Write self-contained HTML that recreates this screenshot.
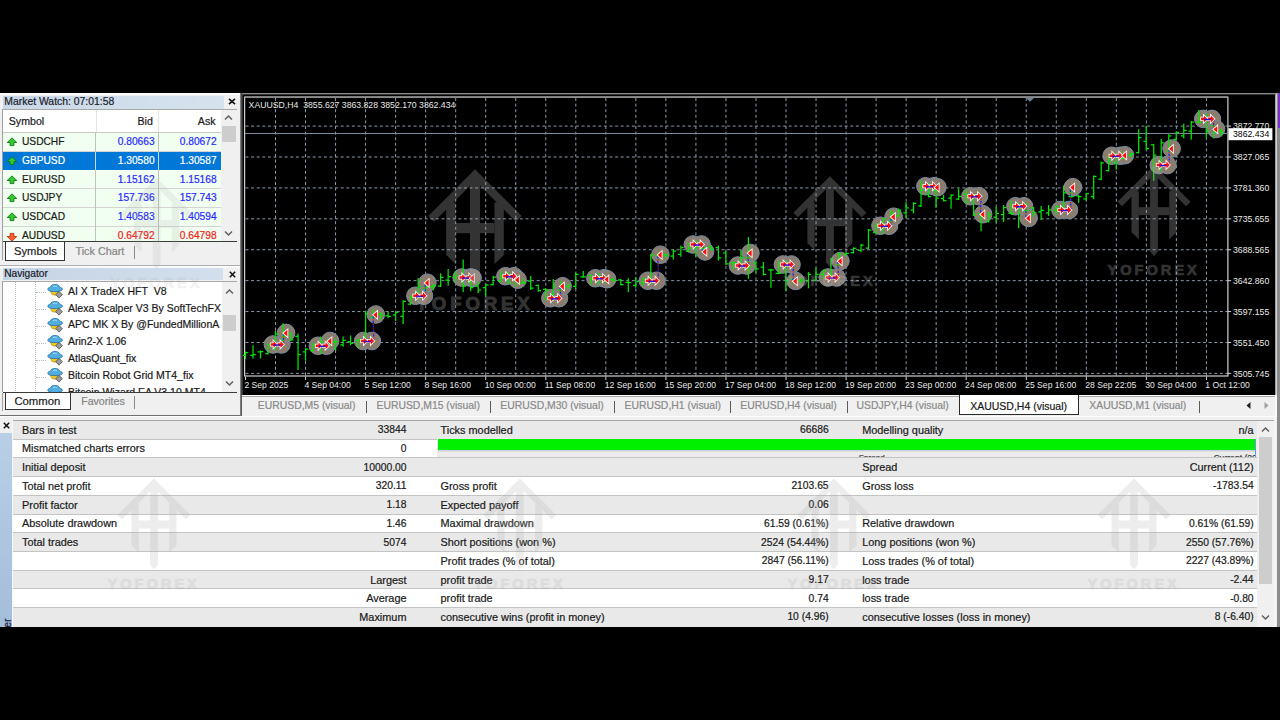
<!DOCTYPE html><html><head><meta charset="utf-8"><style>
html,body{margin:0;padding:0;background:#000;width:1280px;height:720px;overflow:hidden}
body{position:relative;font-family:"Liberation Sans",sans-serif}
.r{position:absolute}
.t{position:absolute;white-space:nowrap;line-height:1;-webkit-text-stroke:0.2px currentColor}
</style></head><body>
<div class="r" style="left:0.00px;top:93.00px;width:1280.00px;height:534.00px;background:#f0f0f0;"></div>
<div class="r" style="left:0.00px;top:93.00px;width:240.00px;height:2.00px;background:#fafafa;"></div>
<div class="r" style="left:3.00px;top:95.50px;width:221.00px;height:13.30px;background:linear-gradient(90deg,#c9d8e8,#d6e2ee);"></div>
<div class="t" style="left:4.30px;top:96.80px;font-size:10.4px;color:#1b1b2b;">Market Watch: 07:01:58</div>
<svg class="r" style="left:228px;top:98px" width="8" height="7" viewBox="0 0 8 7"><path d="M1 0.8L7 6.2M7 0.8L1 6.2" stroke="#111" stroke-width="1.6"/></svg>
<div class="r" style="left:3.00px;top:109.00px;width:234.00px;height:1.20px;background:#a8a8a8;"></div>
<div class="r" style="left:3.00px;top:110.20px;width:217.50px;height:131.50px;background:#ffffff;"></div>
<div class="r" style="left:2.00px;top:109.00px;width:1.00px;height:133.00px;background:#a0a0a0;"></div>
<div class="t" style="left:8.80px;top:116.23px;font-size:10.6px;color:#1a1a1a;">Symbol</div>
<div class="t" style="right:1127.20px;top:116.23px;font-size:10.6px;color:#1a1a1a;text-align:right;">Bid</div>
<div class="t" style="right:1064.50px;top:116.23px;font-size:10.6px;color:#1a1a1a;text-align:right;">Ask</div>
<div class="r" style="left:95.50px;top:110.20px;width:1.00px;height:21.80px;background:#e4e4e4;"></div>
<div class="r" style="left:157.50px;top:110.20px;width:1.00px;height:21.80px;background:#e4e4e4;"></div>
<div class="r" style="left:3.00px;top:131.80px;width:217.50px;height:1.00px;background:#c8c8c8;"></div>
<div class="r" style="left:3.00px;top:132.80px;width:217.50px;height:18.78px;background:#f0fff0;"></div>
<div class="r" style="left:3.00px;top:150.58px;width:217.50px;height:1.00px;background:#d4d4d4;"></div>
<div class="r" style="left:95.20px;top:132.80px;width:1.00px;height:18.78px;background:#c0c0c0;"></div>
<div class="r" style="left:157.50px;top:132.80px;width:1.00px;height:18.78px;background:#c0c0c0;"></div>
<div class="t" style="left:22.00px;top:137.07px;font-size:10.2px;color:#1a1a1a;">USDCHF</div>
<div class="t" style="right:1125.40px;top:137.07px;font-size:10.2px;color:#2a2aff;text-align:right;">0.80663</div>
<div class="t" style="right:1063.40px;top:137.07px;font-size:10.2px;color:#2a2aff;text-align:right;">0.80672</div>
<svg class="r" style="left:6.00px;top:137.10px" width="12" height="11" viewBox="0 0 12 11"><path d="M6 0.9L10.8 5.5H7.9V8.6H4.1V5.5H1.2Z" fill="#34c834" stroke="#0e7a0e" stroke-width="0.9" stroke-linejoin="round"/></svg>
<div class="r" style="left:3.00px;top:151.58px;width:217.50px;height:18.78px;background:#0078d7;"></div>
<div class="r" style="left:3.00px;top:169.36px;width:217.50px;height:1.00px;background:#0078d7;"></div>
<div class="r" style="left:95.20px;top:151.58px;width:1.00px;height:18.78px;background:#c8d8e8;"></div>
<div class="r" style="left:157.50px;top:151.58px;width:1.00px;height:18.78px;background:#c8d8e8;"></div>
<div class="t" style="left:22.00px;top:155.85px;font-size:10.2px;color:#ffffff;">GBPUSD</div>
<div class="t" style="right:1125.40px;top:155.85px;font-size:10.2px;color:#ffffff;text-align:right;">1.30580</div>
<div class="t" style="right:1063.40px;top:155.85px;font-size:10.2px;color:#ffffff;text-align:right;">1.30587</div>
<svg class="r" style="left:6.00px;top:155.88px" width="12" height="11" viewBox="0 0 12 11"><path d="M6 0.9L10.8 5.5H7.9V8.6H4.1V5.5H1.2Z" fill="#34c834" stroke="#0e7a0e" stroke-width="0.9" stroke-linejoin="round"/></svg>
<div class="r" style="left:3.00px;top:170.36px;width:217.50px;height:18.78px;background:#f0fff0;"></div>
<div class="r" style="left:3.00px;top:188.14px;width:217.50px;height:1.00px;background:#d4d4d4;"></div>
<div class="r" style="left:95.20px;top:170.36px;width:1.00px;height:18.78px;background:#c0c0c0;"></div>
<div class="r" style="left:157.50px;top:170.36px;width:1.00px;height:18.78px;background:#c0c0c0;"></div>
<div class="t" style="left:22.00px;top:174.63px;font-size:10.2px;color:#1a1a1a;">EURUSD</div>
<div class="t" style="right:1125.40px;top:174.63px;font-size:10.2px;color:#2a2aff;text-align:right;">1.15162</div>
<div class="t" style="right:1063.40px;top:174.63px;font-size:10.2px;color:#2a2aff;text-align:right;">1.15168</div>
<svg class="r" style="left:6.00px;top:174.66px" width="12" height="11" viewBox="0 0 12 11"><path d="M6 0.9L10.8 5.5H7.9V8.6H4.1V5.5H1.2Z" fill="#34c834" stroke="#0e7a0e" stroke-width="0.9" stroke-linejoin="round"/></svg>
<div class="r" style="left:3.00px;top:189.14px;width:217.50px;height:18.78px;background:#f0fff0;"></div>
<div class="r" style="left:3.00px;top:206.92px;width:217.50px;height:1.00px;background:#d4d4d4;"></div>
<div class="r" style="left:95.20px;top:189.14px;width:1.00px;height:18.78px;background:#c0c0c0;"></div>
<div class="r" style="left:157.50px;top:189.14px;width:1.00px;height:18.78px;background:#c0c0c0;"></div>
<div class="t" style="left:22.00px;top:193.41px;font-size:10.2px;color:#1a1a1a;">USDJPY</div>
<div class="t" style="right:1125.40px;top:193.41px;font-size:10.2px;color:#2a2aff;text-align:right;">157.736</div>
<div class="t" style="right:1063.40px;top:193.41px;font-size:10.2px;color:#2a2aff;text-align:right;">157.743</div>
<svg class="r" style="left:6.00px;top:193.44px" width="12" height="11" viewBox="0 0 12 11"><path d="M6 0.9L10.8 5.5H7.9V8.6H4.1V5.5H1.2Z" fill="#34c834" stroke="#0e7a0e" stroke-width="0.9" stroke-linejoin="round"/></svg>
<div class="r" style="left:3.00px;top:207.92px;width:217.50px;height:18.78px;background:#f0fff0;"></div>
<div class="r" style="left:3.00px;top:225.70px;width:217.50px;height:1.00px;background:#d4d4d4;"></div>
<div class="r" style="left:95.20px;top:207.92px;width:1.00px;height:18.78px;background:#c0c0c0;"></div>
<div class="r" style="left:157.50px;top:207.92px;width:1.00px;height:18.78px;background:#c0c0c0;"></div>
<div class="t" style="left:22.00px;top:212.19px;font-size:10.2px;color:#1a1a1a;">USDCAD</div>
<div class="t" style="right:1125.40px;top:212.19px;font-size:10.2px;color:#2a2aff;text-align:right;">1.40583</div>
<div class="t" style="right:1063.40px;top:212.19px;font-size:10.2px;color:#2a2aff;text-align:right;">1.40594</div>
<svg class="r" style="left:6.00px;top:212.22px" width="12" height="11" viewBox="0 0 12 11"><path d="M6 0.9L10.8 5.5H7.9V8.6H4.1V5.5H1.2Z" fill="#34c834" stroke="#0e7a0e" stroke-width="0.9" stroke-linejoin="round"/></svg>
<div class="r" style="left:3.00px;top:226.70px;width:217.50px;height:14.70px;background:#f0fff0;"></div>
<div class="r" style="left:95.20px;top:226.70px;width:1.00px;height:14.70px;background:#c0c0c0;"></div>
<div class="r" style="left:157.50px;top:226.70px;width:1.00px;height:14.70px;background:#c0c0c0;"></div>
<div class="t" style="left:22.00px;top:230.97px;font-size:10.2px;color:#1a1a1a;">AUDUSD</div>
<div class="t" style="right:1125.40px;top:230.97px;font-size:10.2px;color:#f02020;text-align:right;">0.64792</div>
<div class="t" style="right:1063.40px;top:230.97px;font-size:10.2px;color:#f02020;text-align:right;">0.64798</div>
<svg class="r" style="left:6.00px;top:231.00px" width="12" height="11" viewBox="0 0 12 11"><path d="M6 10.1L10.8 5.5H7.9V2.4H4.1V5.5H1.2Z" fill="#f86030" stroke="#c03010" stroke-width="0.9" stroke-linejoin="round"/></svg>
<div class="r" style="left:220.50px;top:110.20px;width:16.50px;height:131.20px;background:#f0f0f0;"></div>
<div class="r" style="left:222.00px;top:126.00px;width:13.50px;height:16.30px;background:#cdcdcd;"></div>
<svg class="r" style="left:224px;top:114px" width="9" height="7" viewBox="0 0 9 7"><path d="M1 5.5L4.5 2L8 5.5" fill="none" stroke="#606060" stroke-width="1.5"/></svg>
<svg class="r" style="left:224px;top:230px" width="9" height="7" viewBox="0 0 9 7"><path d="M1 1.5L4.5 5L8 1.5" fill="none" stroke="#606060" stroke-width="1.5"/></svg>
<div class="r" style="left:3.00px;top:241.20px;width:234.00px;height:1.30px;background:#3a3a3a;"></div>
<div class="r" style="left:5.20px;top:241.50px;width:60.30px;height:19.00px;background:#ffffff;border:1.3px solid #333;border-top:none;box-sizing:border-box;"></div>
<div class="t" style="left:14.00px;top:245.92px;font-size:11.2px;color:#1a1a1a;">Symbols</div>
<div class="t" style="left:75.50px;top:246.06px;font-size:10.8px;color:#858585;">Tick Chart</div>
<div class="r" style="left:134.20px;top:246.00px;width:1.20px;height:13.00px;background:#8a8a8a;"></div>
<div class="r" style="left:2.00px;top:242.00px;width:1.00px;height:18.00px;background:#a0a0a0;"></div>
<div class="r" style="left:0.00px;top:265.00px;width:240.00px;height:1.20px;background:#b0b0b0;"></div>
<div class="r" style="left:0.00px;top:266.20px;width:240.00px;height:1.50px;background:#fafafa;"></div>
<div class="r" style="left:3.00px;top:268.10px;width:220.30px;height:11.80px;background:linear-gradient(90deg,#c5d4e4,#d3dfec);"></div>
<div class="t" style="left:4.20px;top:268.97px;font-size:10.2px;color:#1b1b2b;">Navigator</div>
<svg class="r" style="left:228.5px;top:271px" width="7" height="7" viewBox="0 0 7 7"><path d="M0.8 0.8L6.2 6.2M6.2 0.8L0.8 6.2" stroke="#111" stroke-width="1.5"/></svg>
<div class="r" style="left:3.00px;top:280.50px;width:234.00px;height:1.20px;background:#a8a8a8;"></div>
<div class="r" style="left:3.00px;top:281.70px;width:218.60px;height:110.50px;background:#ffffff;"></div>
<div class="r" style="left:2.00px;top:281.00px;width:1.00px;height:111.00px;background:#a0a0a0;"></div>
<div class="r" style="left:3px;top:281.7px;width:218.6px;height:110.5px;overflow:hidden">
<div class="r" style="left:12.1px;top:0;width:1px;height:111px;border-left:1px dotted #bcbcbc"></div>
<div class="r" style="left:31.9px;top:0;width:1px;height:111px;border-left:1px dotted #bcbcbc"></div>
<div class="r" style="left:33px;top:10.60px;width:10px;height:1px;border-top:1px dotted #bcbcbc"></div>
<svg class="r" style="left:43.5px;top:2.20px" width="16" height="15" viewBox="0 0 16 15"><path d="M3.6 7.3Q3.8 11.2 7.6 11.2Q11.4 11.2 11.6 7.3Z" fill="#f0c828" stroke="#b08a10" stroke-width="0.6"/><path d="M0.8 5.2C0.8 3.8 2.6 3.4 3.4 3.2C3.8 1.2 5.6 0.4 8 0.4C10.4 0.4 12.2 1.2 12.6 3.2C13.6 3.4 15.4 3.8 15.4 5.2C15.4 6.6 12.4 7.6 8 7.6C3.6 7.6 0.8 6.6 0.8 5.2Z" fill="#52aee0" stroke="#1d6fa6" stroke-width="0.8"/><path d="M6 2.6Q8 1.6 10 2.6" stroke="#a8dcf8" stroke-width="0.9" fill="none"/><path d="M12 7.3L15.4 10.7L12 14.1L8.6 10.7Z" fill="#9a9a9a" stroke="#4a4a4a" stroke-width="0.8"/></svg>
<div class="t" style="left:65px;top:4.01px;font-size:10.5px;color:#1a1a1a">AI X TradeX HFT&nbsp;&nbsp;V8</div>
<div class="r" style="left:33px;top:27.50px;width:10px;height:1px;border-top:1px dotted #bcbcbc"></div>
<svg class="r" style="left:43.5px;top:19.10px" width="16" height="15" viewBox="0 0 16 15"><path d="M3.6 7.3Q3.8 11.2 7.6 11.2Q11.4 11.2 11.6 7.3Z" fill="#f0c828" stroke="#b08a10" stroke-width="0.6"/><path d="M0.8 5.2C0.8 3.8 2.6 3.4 3.4 3.2C3.8 1.2 5.6 0.4 8 0.4C10.4 0.4 12.2 1.2 12.6 3.2C13.6 3.4 15.4 3.8 15.4 5.2C15.4 6.6 12.4 7.6 8 7.6C3.6 7.6 0.8 6.6 0.8 5.2Z" fill="#52aee0" stroke="#1d6fa6" stroke-width="0.8"/><path d="M6 2.6Q8 1.6 10 2.6" stroke="#a8dcf8" stroke-width="0.9" fill="none"/><path d="M12 7.3L15.4 10.7L12 14.1L8.6 10.7Z" fill="#9a9a9a" stroke="#4a4a4a" stroke-width="0.8"/></svg>
<div class="t" style="left:65px;top:20.91px;font-size:10.5px;color:#1a1a1a">Alexa Scalper V3 By SoftTechFX</div>
<div class="r" style="left:33px;top:44.40px;width:10px;height:1px;border-top:1px dotted #bcbcbc"></div>
<svg class="r" style="left:43.5px;top:36.00px" width="16" height="15" viewBox="0 0 16 15"><path d="M3.6 7.3Q3.8 11.2 7.6 11.2Q11.4 11.2 11.6 7.3Z" fill="#f0c828" stroke="#b08a10" stroke-width="0.6"/><path d="M0.8 5.2C0.8 3.8 2.6 3.4 3.4 3.2C3.8 1.2 5.6 0.4 8 0.4C10.4 0.4 12.2 1.2 12.6 3.2C13.6 3.4 15.4 3.8 15.4 5.2C15.4 6.6 12.4 7.6 8 7.6C3.6 7.6 0.8 6.6 0.8 5.2Z" fill="#52aee0" stroke="#1d6fa6" stroke-width="0.8"/><path d="M6 2.6Q8 1.6 10 2.6" stroke="#a8dcf8" stroke-width="0.9" fill="none"/><path d="M12 7.3L15.4 10.7L12 14.1L8.6 10.7Z" fill="#9a9a9a" stroke="#4a4a4a" stroke-width="0.8"/></svg>
<div class="t" style="left:65px;top:37.81px;font-size:10.5px;color:#1a1a1a">APC MK X By @FundedMillionA</div>
<div class="r" style="left:33px;top:61.30px;width:10px;height:1px;border-top:1px dotted #bcbcbc"></div>
<svg class="r" style="left:43.5px;top:52.90px" width="16" height="15" viewBox="0 0 16 15"><path d="M3.6 7.3Q3.8 11.2 7.6 11.2Q11.4 11.2 11.6 7.3Z" fill="#f0c828" stroke="#b08a10" stroke-width="0.6"/><path d="M0.8 5.2C0.8 3.8 2.6 3.4 3.4 3.2C3.8 1.2 5.6 0.4 8 0.4C10.4 0.4 12.2 1.2 12.6 3.2C13.6 3.4 15.4 3.8 15.4 5.2C15.4 6.6 12.4 7.6 8 7.6C3.6 7.6 0.8 6.6 0.8 5.2Z" fill="#52aee0" stroke="#1d6fa6" stroke-width="0.8"/><path d="M6 2.6Q8 1.6 10 2.6" stroke="#a8dcf8" stroke-width="0.9" fill="none"/><path d="M12 7.3L15.4 10.7L12 14.1L8.6 10.7Z" fill="#9a9a9a" stroke="#4a4a4a" stroke-width="0.8"/></svg>
<div class="t" style="left:65px;top:54.71px;font-size:10.5px;color:#1a1a1a">Arin2-X 1.06</div>
<div class="r" style="left:33px;top:78.20px;width:10px;height:1px;border-top:1px dotted #bcbcbc"></div>
<svg class="r" style="left:43.5px;top:69.80px" width="16" height="15" viewBox="0 0 16 15"><path d="M3.6 7.3Q3.8 11.2 7.6 11.2Q11.4 11.2 11.6 7.3Z" fill="#f0c828" stroke="#b08a10" stroke-width="0.6"/><path d="M0.8 5.2C0.8 3.8 2.6 3.4 3.4 3.2C3.8 1.2 5.6 0.4 8 0.4C10.4 0.4 12.2 1.2 12.6 3.2C13.6 3.4 15.4 3.8 15.4 5.2C15.4 6.6 12.4 7.6 8 7.6C3.6 7.6 0.8 6.6 0.8 5.2Z" fill="#52aee0" stroke="#1d6fa6" stroke-width="0.8"/><path d="M6 2.6Q8 1.6 10 2.6" stroke="#a8dcf8" stroke-width="0.9" fill="none"/><path d="M12 7.3L15.4 10.7L12 14.1L8.6 10.7Z" fill="#9a9a9a" stroke="#4a4a4a" stroke-width="0.8"/></svg>
<div class="t" style="left:65px;top:71.61px;font-size:10.5px;color:#1a1a1a">AtlasQuant_fix</div>
<div class="r" style="left:33px;top:95.10px;width:10px;height:1px;border-top:1px dotted #bcbcbc"></div>
<svg class="r" style="left:43.5px;top:86.70px" width="16" height="15" viewBox="0 0 16 15"><path d="M3.6 7.3Q3.8 11.2 7.6 11.2Q11.4 11.2 11.6 7.3Z" fill="#f0c828" stroke="#b08a10" stroke-width="0.6"/><path d="M0.8 5.2C0.8 3.8 2.6 3.4 3.4 3.2C3.8 1.2 5.6 0.4 8 0.4C10.4 0.4 12.2 1.2 12.6 3.2C13.6 3.4 15.4 3.8 15.4 5.2C15.4 6.6 12.4 7.6 8 7.6C3.6 7.6 0.8 6.6 0.8 5.2Z" fill="#52aee0" stroke="#1d6fa6" stroke-width="0.8"/><path d="M6 2.6Q8 1.6 10 2.6" stroke="#a8dcf8" stroke-width="0.9" fill="none"/><path d="M12 7.3L15.4 10.7L12 14.1L8.6 10.7Z" fill="#9a9a9a" stroke="#4a4a4a" stroke-width="0.8"/></svg>
<div class="t" style="left:65px;top:88.51px;font-size:10.5px;color:#1a1a1a">Bitcoin Robot Grid MT4_fix</div>
<div class="r" style="left:33px;top:112.00px;width:10px;height:1px;border-top:1px dotted #bcbcbc"></div>
<svg class="r" style="left:43.5px;top:103.60px" width="16" height="15" viewBox="0 0 16 15"><path d="M3.6 7.3Q3.8 11.2 7.6 11.2Q11.4 11.2 11.6 7.3Z" fill="#f0c828" stroke="#b08a10" stroke-width="0.6"/><path d="M0.8 5.2C0.8 3.8 2.6 3.4 3.4 3.2C3.8 1.2 5.6 0.4 8 0.4C10.4 0.4 12.2 1.2 12.6 3.2C13.6 3.4 15.4 3.8 15.4 5.2C15.4 6.6 12.4 7.6 8 7.6C3.6 7.6 0.8 6.6 0.8 5.2Z" fill="#52aee0" stroke="#1d6fa6" stroke-width="0.8"/><path d="M6 2.6Q8 1.6 10 2.6" stroke="#a8dcf8" stroke-width="0.9" fill="none"/><path d="M12 7.3L15.4 10.7L12 14.1L8.6 10.7Z" fill="#9a9a9a" stroke="#4a4a4a" stroke-width="0.8"/></svg>
<div class="t" style="left:65px;top:105.41px;font-size:10.5px;color:#1a1a1a">Bitcoin Wizard EA V3.10 MT4</div>
</div>
<div class="r" style="left:221.60px;top:281.70px;width:14.80px;height:110.50px;background:#f0f0f0;"></div>
<div class="r" style="left:222.50px;top:315.00px;width:13.50px;height:15.70px;background:#cdcdcd;"></div>
<svg class="r" style="left:224.5px;top:288px" width="9" height="7" viewBox="0 0 9 7"><path d="M1 5.5L4.5 2L8 5.5" fill="none" stroke="#606060" stroke-width="1.5"/></svg>
<svg class="r" style="left:224.5px;top:380px" width="9" height="7" viewBox="0 0 9 7"><path d="M1 1.5L4.5 5L8 1.5" fill="none" stroke="#606060" stroke-width="1.5"/></svg>
<div class="r" style="left:3.00px;top:392.20px;width:234.00px;height:1.30px;background:#3a3a3a;"></div>
<div class="r" style="left:5.40px;top:392.50px;width:65.60px;height:17.80px;background:#ffffff;border:1.3px solid #333;border-top:none;box-sizing:border-box;"></div>
<div class="t" style="left:14.40px;top:396.03px;font-size:11.3px;color:#1a1a1a;">Common</div>
<div class="t" style="left:81.20px;top:395.73px;font-size:10.6px;color:#858585;">Favorites</div>
<div class="r" style="left:134.20px;top:396.00px;width:1.20px;height:13.00px;background:#8a8a8a;"></div>
<div class="r" style="left:2.00px;top:393.00px;width:1.00px;height:18.00px;background:#a0a0a0;"></div>
<div class="r" style="left:0.00px;top:414.60px;width:241.60px;height:1.10px;background:#707070;"></div>
<div class="r" style="left:0.00px;top:415.90px;width:1280.00px;height:1.30px;background:#fcfcfc;"></div>
<div class="r" style="left:240.20px;top:93.00px;width:2.00px;height:323.00px;background:linear-gradient(90deg,#9a9a9a,#2a2a2a);"></div>
<svg class="r" style="left:0;top:0" width="1280" height="720" viewBox="0 0 1280 720" shape-rendering="auto">
<rect x="242.2" y="93" width="1034" height="302" fill="#000"/>
<rect x="242.2" y="93" width="1034" height="1.4" fill="#8a8a8a"/>
<rect x="1275.3" y="94.4" width="1.2" height="300.6" fill="#e8e8e8"/>
<path d="M245.5 126.10H1227.5 M245.5 157.01H1227.5 M245.5 187.92H1227.5 M245.5 218.83H1227.5 M245.5 249.74H1227.5 M245.5 280.65H1227.5 M245.5 311.56H1227.5 M245.5 342.47H1227.5 M245.5 373.38H1227.5" stroke="#8a98a8" stroke-width="1" stroke-dasharray="3 2.6"/>
<path d="M275.50 98V376 M305.53 98V376 M335.56 98V376 M365.59 98V376 M395.62 98V376 M425.65 98V376 M455.68 98V376 M485.71 98V376 M515.74 98V376 M545.77 98V376 M575.80 98V376 M605.83 98V376 M635.86 98V376 M665.89 98V376 M695.92 98V376 M725.95 98V376 M755.98 98V376 M786.01 98V376 M816.04 98V376 M846.07 98V376 M876.10 98V376 M906.13 98V376 M936.16 98V376 M966.19 98V376 M996.22 98V376 M1026.25 98V376 M1056.28 98V376 M1086.31 98V376 M1116.34 98V376 M1146.37 98V376 M1176.40 98V376 M1206.43 98V376" stroke="#8a98a8" stroke-width="1" stroke-dasharray="3 2.6"/>
<rect x="244.6" y="97.1" width="983.3" height="278.9" fill="none" stroke="#d0d0d0" stroke-width="1.2"/>
<rect x="244.6" y="96.4" width="983" height="1.4" fill="#8c8c8c"/>
<circle cx="272.90" cy="344.50" r="8.8" fill="#8b7d6d" stroke="#7a8da3" stroke-width="1"/>
<circle cx="281.50" cy="344.50" r="8.8" fill="#8b7d6d" stroke="#7a8da3" stroke-width="1"/>
<circle cx="286.10" cy="332.90" r="8.8" fill="#8b7d6d" stroke="#7a8da3" stroke-width="1"/>
<circle cx="317.90" cy="345.75" r="8.8" fill="#8b7d6d" stroke="#7a8da3" stroke-width="1"/>
<circle cx="326.50" cy="345.75" r="8.8" fill="#8b7d6d" stroke="#7a8da3" stroke-width="1"/>
<circle cx="330.10" cy="340.95" r="8.8" fill="#8b7d6d" stroke="#7a8da3" stroke-width="1"/>
<circle cx="363.20" cy="341.00" r="8.8" fill="#8b7d6d" stroke="#7a8da3" stroke-width="1"/>
<circle cx="371.80" cy="341.00" r="8.8" fill="#8b7d6d" stroke="#7a8da3" stroke-width="1"/>
<circle cx="375.80" cy="314.50" r="8.8" fill="#8b7d6d" stroke="#7a8da3" stroke-width="1"/>
<circle cx="415.40" cy="295.75" r="8.8" fill="#8b7d6d" stroke="#7a8da3" stroke-width="1"/>
<circle cx="424.00" cy="295.75" r="8.8" fill="#8b7d6d" stroke="#7a8da3" stroke-width="1"/>
<circle cx="427.40" cy="282.70" r="8.8" fill="#8b7d6d" stroke="#7a8da3" stroke-width="1"/>
<circle cx="461.65" cy="277.50" r="8.8" fill="#8b7d6d" stroke="#7a8da3" stroke-width="1"/>
<circle cx="470.25" cy="277.50" r="8.8" fill="#8b7d6d" stroke="#7a8da3" stroke-width="1"/>
<circle cx="472.60" cy="277.95" r="8.8" fill="#8b7d6d" stroke="#7a8da3" stroke-width="1"/>
<circle cx="505.40" cy="276.25" r="8.8" fill="#8b7d6d" stroke="#7a8da3" stroke-width="1"/>
<circle cx="514.00" cy="276.25" r="8.8" fill="#8b7d6d" stroke="#7a8da3" stroke-width="1"/>
<circle cx="517.60" cy="279.70" r="8.8" fill="#8b7d6d" stroke="#7a8da3" stroke-width="1"/>
<circle cx="550.40" cy="298.25" r="8.8" fill="#8b7d6d" stroke="#7a8da3" stroke-width="1"/>
<circle cx="559.00" cy="298.25" r="8.8" fill="#8b7d6d" stroke="#7a8da3" stroke-width="1"/>
<circle cx="562.60" cy="286.20" r="8.8" fill="#8b7d6d" stroke="#7a8da3" stroke-width="1"/>
<circle cx="595.40" cy="278.25" r="8.8" fill="#8b7d6d" stroke="#7a8da3" stroke-width="1"/>
<circle cx="604.00" cy="278.25" r="8.8" fill="#8b7d6d" stroke="#7a8da3" stroke-width="1"/>
<circle cx="607.10" cy="279.20" r="8.8" fill="#8b7d6d" stroke="#7a8da3" stroke-width="1"/>
<circle cx="647.90" cy="280.75" r="8.8" fill="#8b7d6d" stroke="#7a8da3" stroke-width="1"/>
<circle cx="656.50" cy="280.75" r="8.8" fill="#8b7d6d" stroke="#7a8da3" stroke-width="1"/>
<circle cx="660.40" cy="254.70" r="8.8" fill="#8b7d6d" stroke="#7a8da3" stroke-width="1"/>
<circle cx="692.90" cy="244.50" r="8.8" fill="#8b7d6d" stroke="#7a8da3" stroke-width="1"/>
<circle cx="701.50" cy="244.50" r="8.8" fill="#8b7d6d" stroke="#7a8da3" stroke-width="1"/>
<circle cx="705.10" cy="251.45" r="8.8" fill="#8b7d6d" stroke="#7a8da3" stroke-width="1"/>
<circle cx="737.90" cy="265.50" r="8.8" fill="#8b7d6d" stroke="#7a8da3" stroke-width="1"/>
<circle cx="746.50" cy="265.50" r="8.8" fill="#8b7d6d" stroke="#7a8da3" stroke-width="1"/>
<circle cx="750.40" cy="252.95" r="8.8" fill="#8b7d6d" stroke="#7a8da3" stroke-width="1"/>
<circle cx="782.90" cy="264.50" r="8.8" fill="#8b7d6d" stroke="#7a8da3" stroke-width="1"/>
<circle cx="791.50" cy="264.50" r="8.8" fill="#8b7d6d" stroke="#7a8da3" stroke-width="1"/>
<circle cx="795.60" cy="280.95" r="8.8" fill="#8b7d6d" stroke="#7a8da3" stroke-width="1"/>
<circle cx="827.90" cy="277.50" r="8.8" fill="#8b7d6d" stroke="#7a8da3" stroke-width="1"/>
<circle cx="836.50" cy="277.50" r="8.8" fill="#8b7d6d" stroke="#7a8da3" stroke-width="1"/>
<circle cx="840.40" cy="260.95" r="8.8" fill="#8b7d6d" stroke="#7a8da3" stroke-width="1"/>
<circle cx="880.40" cy="225.75" r="8.8" fill="#8b7d6d" stroke="#7a8da3" stroke-width="1"/>
<circle cx="889.00" cy="225.75" r="8.8" fill="#8b7d6d" stroke="#7a8da3" stroke-width="1"/>
<circle cx="893.60" cy="216.70" r="8.8" fill="#8b7d6d" stroke="#7a8da3" stroke-width="1"/>
<circle cx="925.40" cy="186.25" r="8.8" fill="#8b7d6d" stroke="#7a8da3" stroke-width="1"/>
<circle cx="934.00" cy="186.25" r="8.8" fill="#8b7d6d" stroke="#7a8da3" stroke-width="1"/>
<circle cx="937.40" cy="187.20" r="8.8" fill="#8b7d6d" stroke="#7a8da3" stroke-width="1"/>
<circle cx="970.40" cy="196.25" r="8.8" fill="#8b7d6d" stroke="#7a8da3" stroke-width="1"/>
<circle cx="979.00" cy="196.25" r="8.8" fill="#8b7d6d" stroke="#7a8da3" stroke-width="1"/>
<circle cx="983.10" cy="214.20" r="8.8" fill="#8b7d6d" stroke="#7a8da3" stroke-width="1"/>
<circle cx="1015.40" cy="206.25" r="8.8" fill="#8b7d6d" stroke="#7a8da3" stroke-width="1"/>
<circle cx="1024.00" cy="206.25" r="8.8" fill="#8b7d6d" stroke="#7a8da3" stroke-width="1"/>
<circle cx="1028.60" cy="217.95" r="8.8" fill="#8b7d6d" stroke="#7a8da3" stroke-width="1"/>
<circle cx="1060.40" cy="210.00" r="8.8" fill="#8b7d6d" stroke="#7a8da3" stroke-width="1"/>
<circle cx="1069.00" cy="210.00" r="8.8" fill="#8b7d6d" stroke="#7a8da3" stroke-width="1"/>
<circle cx="1072.90" cy="187.20" r="8.8" fill="#8b7d6d" stroke="#7a8da3" stroke-width="1"/>
<circle cx="1111.65" cy="155.75" r="8.8" fill="#8b7d6d" stroke="#7a8da3" stroke-width="1"/>
<circle cx="1120.25" cy="155.75" r="8.8" fill="#8b7d6d" stroke="#7a8da3" stroke-width="1"/>
<circle cx="1124.90" cy="155.20" r="8.8" fill="#8b7d6d" stroke="#7a8da3" stroke-width="1"/>
<circle cx="1158.80" cy="165.00" r="8.8" fill="#8b7d6d" stroke="#7a8da3" stroke-width="1"/>
<circle cx="1167.40" cy="165.00" r="8.8" fill="#8b7d6d" stroke="#7a8da3" stroke-width="1"/>
<circle cx="1171.60" cy="148.50" r="8.8" fill="#8b7d6d" stroke="#7a8da3" stroke-width="1"/>
<circle cx="1203.30" cy="118.90" r="8.8" fill="#8b7d6d" stroke="#7a8da3" stroke-width="1"/>
<circle cx="1211.90" cy="118.90" r="8.8" fill="#8b7d6d" stroke="#7a8da3" stroke-width="1"/>
<circle cx="1216.00" cy="129.00" r="8.8" fill="#8b7d6d" stroke="#7a8da3" stroke-width="1"/>
<rect x="245" y="133" width="983" height="1" fill="#7b8a9b"/>
<path d="M245.50 351.60V359.30M242.70 355.45H245.50M245.50 352.60H248.30M253.01 345.20V358.40M250.21 355.45H253.01M253.01 354.50H255.81M260.51 350.60V358.40M257.71 351.80H260.51M260.51 351.60H263.31M268.02 343.30V354.50M265.22 353.50H268.02M268.02 344.30H270.82M275.52 331.10V349.60M272.72 348.60H275.52M275.52 334.15H278.32M283.03 323.30V345.00M280.23 340.35H283.03M283.03 336.45H285.83M290.54 332.00V340.90M287.74 334.15H290.54M290.54 339.90H293.34M298.04 333.60V370.00M295.24 336.45H298.04M298.04 354.50H300.84M305.55 348.20V360.80M302.75 351.80H305.55M305.55 349.20H308.35M313.05 342.80V351.60M310.25 350.60H313.05M313.05 345.25H315.85M320.56 336.50V354.00M317.76 347.20H320.56M320.56 342.05H323.36M328.07 338.40V345.70M325.27 344.70H328.07M328.07 344.70H330.87M335.57 338.90V350.60M332.77 342.05H335.57M335.57 341.60H338.37M343.08 336.50V346.70M340.28 344.75H343.08M343.08 340.35H345.88M350.58 335.50V345.20M347.78 341.60H350.58M350.58 343.30H353.38M358.09 338.90V347.70M355.29 340.35H358.09M358.09 339.90H360.89M365.60 310.70V343.30M362.80 342.30H365.60M365.60 313.80H368.40M373.10 309.30V318.30M370.30 317.30H373.10M373.10 315.85H375.90M380.61 312.00V319.70M377.81 313.80H380.61M380.61 314.85H383.41M388.11 311.40V318.30M385.31 315.85H388.11M388.11 316.25H390.91M395.62 311.40V321.10M392.82 314.85H395.62M395.62 312.40H398.42M403.13 300.30V323.90M400.33 316.25H403.13M403.13 301.30H405.93M410.63 295.40V305.10M407.83 304.10H410.63M410.63 296.40H413.43M418.14 278.00V299.60M415.34 298.60H418.14M418.14 286.70H420.94M425.64 280.80V292.60M422.84 288.80H425.64M425.64 287.45H428.44M433.15 284.30V290.60M430.35 286.70H433.15M433.15 285.30H435.95M440.66 273.20V287.10M437.86 286.10H440.66M440.66 277.35H443.46M448.16 269.00V285.70M445.36 280.15H448.16M448.16 276.65H450.96M455.67 271.10V282.20M452.87 277.35H455.67M455.67 275.75H458.47M463.17 259.50V292.00M460.37 276.65H463.17M463.17 286.02H465.97M470.68 280.80V291.25M467.88 281.80H470.68M470.68 287.50H473.48M478.19 281.70V293.30M475.39 286.02H478.19M478.19 290.00H480.99M485.69 283.90V296.10M482.89 287.50H485.69M485.69 284.90H488.49M493.20 276.10V285.60M490.40 284.60H493.20M493.20 277.10H496.00M500.70 271.10V282.20M497.90 280.85H500.70M500.70 277.80H503.50M508.21 271.70V283.90M505.41 276.65H508.21M508.21 282.80H511.01M515.72 278.90V286.70M512.92 279.90H515.72M515.72 281.10H518.52M523.22 278.30V283.90M520.42 282.80H523.22M523.22 282.90H526.02M530.73 276.10V290.00M527.93 281.10H530.73M530.73 288.05H533.53M538.23 284.40V291.70M535.43 285.40H538.23M538.23 290.70H541.03M545.74 288.30V300.60M542.94 289.30H545.74M545.74 290.00H548.54M553.25 278.90V301.10M550.45 294.45H553.25M553.25 286.65H556.05M560.75 281.10V292.20M557.95 290.00H560.75M560.75 286.40H563.55M568.26 283.90V288.90M565.46 286.65H568.26M568.26 284.90H571.06M575.76 272.80V288.90M572.96 286.40H575.76M575.76 274.45H578.56M583.27 271.10V277.80M580.47 276.80H583.27M583.27 276.80H586.07M590.78 274.40V284.40M587.98 275.40H590.78M590.78 278.90H593.58M598.28 272.80V285.00M595.48 279.40H598.28M598.28 279.45H601.08M605.79 275.60V283.30M602.99 278.90H605.79M605.79 279.75H608.59M613.29 277.80V281.70M610.49 279.45H613.29M613.29 280.70H616.09M620.80 278.90V285.60M618.00 279.90H620.80M620.80 284.60H623.60M628.31 278.30V292.20M625.51 282.25H628.31M628.31 282.50H631.11M635.81 277.20V287.80M633.01 285.25H635.81M635.81 281.70H638.61M643.32 277.80V285.60M640.52 282.50H643.32M643.32 278.80H646.12M650.82 253.90V284.40M648.02 281.70H650.82M650.82 254.90H653.62M658.33 252.20V256.70M655.53 255.70H658.33M658.33 255.70H661.13M665.84 253.90V258.30M663.04 254.90H665.84M665.84 254.90H668.64M673.34 249.40V259.40M670.54 256.10H673.34M673.34 251.15H676.14M680.85 245.60V256.70M678.05 254.40H680.85M680.85 247.50H683.65M688.35 242.80V252.20M685.55 251.15H688.35M688.35 248.35H691.15M695.86 240.00V256.70M693.06 247.50H695.86M695.86 247.15H698.66M703.37 242.70V251.60M700.57 248.35H703.37M703.37 247.65H706.17M710.87 244.90V250.40M708.07 247.15H710.87M710.87 249.40H713.67M718.38 245.40V260.40M715.58 247.65H718.38M718.38 257.95H721.18M725.88 251.00V264.90M723.08 252.90H725.88M725.88 263.90H728.68M733.39 261.60V269.30M730.59 262.60H733.39M733.39 262.60H736.19M740.90 249.90V266.00M738.10 265.00H740.90M740.90 257.95H743.70M748.40 237.10V278.80M745.60 257.95H748.40M748.40 267.15H751.20M755.91 261.60V272.70M753.11 262.60H755.91M755.91 268.75H758.71M763.41 262.10V275.40M760.61 267.15H763.41M763.41 274.40H766.21M770.92 268.80V287.70M768.12 269.80H770.92M770.92 269.80H773.72M778.43 260.40V274.30M775.63 273.30H778.43M778.43 273.30H781.23M785.93 260.40V291.00M783.13 267.35H785.93M785.93 280.90H788.73M793.44 278.00V283.80M790.64 279.00H793.44M793.44 280.75H796.24M800.94 277.70V283.80M798.14 280.90H800.94M800.94 280.15H803.74M808.45 272.10V288.20M805.65 280.75H808.45M808.45 274.45H811.25M815.96 267.90V281.00M813.16 280.00H815.96M815.96 274.43H818.76M823.46 269.75V279.10M820.66 274.45H823.46M823.46 270.75H826.26M830.97 257.90V277.25M828.17 274.43H830.97M830.97 259.12H833.77M838.47 252.25V266.00M835.67 265.00H838.47M838.47 253.88H841.27M845.98 252.25V255.50M843.18 254.50H845.98M845.98 253.25H848.78M853.49 247.25V253.50M850.69 252.50H853.49M853.49 248.25H856.29M860.99 244.10V252.25M858.19 250.38H860.99M860.99 245.10H863.79M868.50 229.10V249.10M865.70 248.10H868.50M868.50 230.10H871.30M876.00 222.90V233.50M873.20 232.50H876.00M876.00 226.00H878.80M883.51 217.90V234.10M880.71 228.20H883.51M883.51 218.90H886.31M891.02 209.75V222.00M888.22 221.00H891.02M891.02 212.88H893.82M898.52 208.50V217.25M895.72 215.88H898.52M898.52 210.07H901.32M906.03 202.25V217.90M903.23 212.88H906.03M906.03 207.88H908.83M913.53 202.25V213.50M910.73 210.07H913.53M913.53 203.25H916.33M921.04 180.60V206.90M918.24 205.90H921.04M921.04 190.30H923.84M928.55 183.00V197.60M925.75 193.75H928.55M928.55 196.60H931.35M936.05 189.30V207.80M933.25 190.30H936.05M936.05 198.10H938.85M943.56 194.70V201.50M940.76 198.55H943.56M943.56 200.50H946.36M951.06 194.20V208.80M948.26 198.10H951.06M951.06 195.20H953.86M958.57 188.40V200.00M955.77 199.00H958.57M958.57 196.40H961.37M966.08 189.80V203.00M963.28 194.20H966.08M966.08 202.00H968.88M973.58 193.70V216.10M970.78 196.40H973.58M973.58 215.10H976.38M981.09 212.70V231.20M978.29 213.70H981.09M981.09 217.05H983.89M988.59 211.70V222.40M985.79 221.40H988.59M988.59 214.65H991.39M996.10 206.90V222.40M993.30 217.05H996.10M996.10 213.40H998.90M1003.61 204.90V221.90M1000.81 214.65H1003.61M1003.61 207.55H1006.41M1011.11 200.50V214.60M1008.31 213.40H1011.11M1011.11 213.60H1013.91M1018.62 203.00V228.30M1015.82 207.55H1018.62M1018.62 207.10H1021.42M1026.12 202.50V211.70M1023.32 210.70H1026.12M1026.12 210.70H1028.92M1033.63 206.90V216.60M1030.83 207.90H1033.63M1033.63 212.95H1036.43M1041.14 206.00V219.90M1038.34 211.75H1041.14M1041.14 210.45H1043.94M1048.64 204.90V216.00M1045.84 212.95H1048.64M1048.64 209.85H1051.44M1056.15 205.40V214.30M1053.35 210.45H1056.15M1056.15 206.40H1058.95M1063.65 185.40V210.40M1060.85 209.40H1063.65M1063.65 192.95H1066.45M1071.16 188.20V197.70M1068.36 196.70H1071.16M1071.16 196.70H1073.96M1078.67 194.90V202.70M1075.87 195.90H1078.67M1078.67 196.55H1081.47M1086.17 192.70V200.40M1083.37 198.80H1086.17M1086.17 193.70H1088.97M1093.68 175.40V199.30M1090.88 196.55H1093.68M1093.68 176.40H1096.48M1101.18 161.50V180.20M1098.38 179.20H1101.18M1101.18 162.95H1103.98M1108.69 154.30V171.60M1105.89 170.60H1108.69M1108.69 161.25H1111.49M1116.20 152.70V169.80M1113.40 162.95H1116.20M1116.20 155.45H1119.00M1123.70 151.60V159.30M1120.90 158.30H1123.70M1123.70 155.10H1126.50M1131.21 152.50V157.70M1128.41 155.45H1131.21M1131.21 153.50H1134.01M1138.71 129.30V153.60M1135.91 152.60H1138.71M1138.71 137.70H1141.51M1146.22 125.90V149.50M1143.42 141.45H1146.22M1146.22 148.50H1149.02M1153.73 143.90V180.70M1150.93 144.90H1153.73M1153.73 155.00H1156.53M1161.23 139.00V171.00M1158.43 162.30H1161.23M1161.23 142.90H1164.03M1168.74 134.20V151.60M1165.94 150.60H1168.74M1168.74 135.90H1171.54M1176.24 131.40V140.40M1173.44 139.40H1176.24M1176.24 132.40H1179.04M1183.75 123.80V138.40M1180.95 135.90H1183.75M1183.75 130.38H1186.55M1191.26 121.00V139.75M1188.46 131.10H1191.26M1191.26 122.00H1194.06M1198.76 109.90V123.10M1195.96 122.10H1198.76M1198.76 122.10H1201.56M1206.27 113.40V137.70M1203.47 116.50H1206.27M1206.27 131.10H1209.07M1213.77 123.80V138.40M1210.97 125.55H1213.77M1213.77 132.45H1216.57M1221.28 128.60V136.30M1218.48 131.10H1221.28M1221.28 132.45H1224.08" stroke="#00e600" stroke-width="1.25" fill="none"/>
<path d="M283.50 344.50L283.50 333.20" stroke="#2020ff" stroke-width="1.3" stroke-dasharray="2 2.5"/>
<path d="M283.50 344.50L283.50 333.20" stroke="#e01010" stroke-width="1.3" stroke-dasharray="1 3.5" stroke-dashoffset="-2.5"/>
<path d="M276.90 344.50L273.50 341.00V343.20H270.70V345.80H273.50V348.00Z" fill="#ff0c0c" stroke="#ffffff" stroke-width="1.6" paint-order="stroke fill" stroke-linejoin="miter"/>
<path d="M283.90 344.50L280.50 341.00V343.20H277.70V345.80H280.50V348.00Z" fill="#ff0c0c" stroke="#ffffff" stroke-width="1.6" paint-order="stroke fill" stroke-linejoin="miter"/>
<rect x="273.50" y="344.40" width="7" height="1.4" fill="#2a10d0"/>
<path d="M283.50 333.20L287.40 329.80V336.60Z" fill="#ff0c0c" stroke="#ffffff" stroke-width="1.7" paint-order="stroke fill"/>
<path d="M328.50 345.75L327.50 341.25" stroke="#2020ff" stroke-width="1.3" stroke-dasharray="2 2.5"/>
<path d="M328.50 345.75L327.50 341.25" stroke="#e01010" stroke-width="1.3" stroke-dasharray="1 3.5" stroke-dashoffset="-2.5"/>
<path d="M321.90 345.75L318.50 342.25V344.45H315.70V347.05H318.50V349.25Z" fill="#ff0c0c" stroke="#ffffff" stroke-width="1.6" paint-order="stroke fill" stroke-linejoin="miter"/>
<path d="M328.90 345.75L325.50 342.25V344.45H322.70V347.05H325.50V349.25Z" fill="#ff0c0c" stroke="#ffffff" stroke-width="1.6" paint-order="stroke fill" stroke-linejoin="miter"/>
<rect x="318.50" y="345.65" width="7" height="1.4" fill="#2a10d0"/>
<path d="M327.50 341.25L331.40 337.85V344.65Z" fill="#ff0c0c" stroke="#ffffff" stroke-width="1.7" paint-order="stroke fill"/>
<path d="M373.80 341.00L373.20 314.80" stroke="#2020ff" stroke-width="1.3" stroke-dasharray="2 2.5"/>
<path d="M373.80 341.00L373.20 314.80" stroke="#e01010" stroke-width="1.3" stroke-dasharray="1 3.5" stroke-dashoffset="-2.5"/>
<path d="M367.20 341.00L363.80 337.50V339.70H361.00V342.30H363.80V344.50Z" fill="#ff0c0c" stroke="#ffffff" stroke-width="1.6" paint-order="stroke fill" stroke-linejoin="miter"/>
<path d="M374.20 341.00L370.80 337.50V339.70H368.00V342.30H370.80V344.50Z" fill="#ff0c0c" stroke="#ffffff" stroke-width="1.6" paint-order="stroke fill" stroke-linejoin="miter"/>
<rect x="363.80" y="340.90" width="7" height="1.4" fill="#2a10d0"/>
<path d="M373.20 314.80L377.10 311.40V318.20Z" fill="#ff0c0c" stroke="#ffffff" stroke-width="1.7" paint-order="stroke fill"/>
<path d="M426.00 295.75L424.80 283.00" stroke="#2020ff" stroke-width="1.3" stroke-dasharray="2 2.5"/>
<path d="M426.00 295.75L424.80 283.00" stroke="#e01010" stroke-width="1.3" stroke-dasharray="1 3.5" stroke-dashoffset="-2.5"/>
<path d="M419.40 295.75L416.00 292.25V294.45H413.20V297.05H416.00V299.25Z" fill="#ff0c0c" stroke="#ffffff" stroke-width="1.6" paint-order="stroke fill" stroke-linejoin="miter"/>
<path d="M426.40 295.75L423.00 292.25V294.45H420.20V297.05H423.00V299.25Z" fill="#ff0c0c" stroke="#ffffff" stroke-width="1.6" paint-order="stroke fill" stroke-linejoin="miter"/>
<rect x="416.00" y="295.65" width="7" height="1.4" fill="#2a10d0"/>
<path d="M424.80 283.00L428.70 279.60V286.40Z" fill="#ff0c0c" stroke="#ffffff" stroke-width="1.7" paint-order="stroke fill"/>
<path d="M472.25 277.50L470.00 278.25" stroke="#2020ff" stroke-width="1.3" stroke-dasharray="2 2.5"/>
<path d="M472.25 277.50L470.00 278.25" stroke="#e01010" stroke-width="1.3" stroke-dasharray="1 3.5" stroke-dashoffset="-2.5"/>
<path d="M465.65 277.50L462.25 274.00V276.20H459.45V278.80H462.25V281.00Z" fill="#ff0c0c" stroke="#ffffff" stroke-width="1.6" paint-order="stroke fill" stroke-linejoin="miter"/>
<path d="M472.65 277.50L469.25 274.00V276.20H466.45V278.80H469.25V281.00Z" fill="#ff0c0c" stroke="#ffffff" stroke-width="1.6" paint-order="stroke fill" stroke-linejoin="miter"/>
<rect x="462.25" y="277.40" width="7" height="1.4" fill="#2a10d0"/>
<path d="M470.00 278.25L473.90 274.85V281.65Z" fill="#ff0c0c" stroke="#ffffff" stroke-width="1.7" paint-order="stroke fill"/>
<path d="M516.00 276.25L515.00 280.00" stroke="#2020ff" stroke-width="1.3" stroke-dasharray="2 2.5"/>
<path d="M516.00 276.25L515.00 280.00" stroke="#e01010" stroke-width="1.3" stroke-dasharray="1 3.5" stroke-dashoffset="-2.5"/>
<path d="M509.40 276.25L506.00 272.75V274.95H503.20V277.55H506.00V279.75Z" fill="#ff0c0c" stroke="#ffffff" stroke-width="1.6" paint-order="stroke fill" stroke-linejoin="miter"/>
<path d="M516.40 276.25L513.00 272.75V274.95H510.20V277.55H513.00V279.75Z" fill="#ff0c0c" stroke="#ffffff" stroke-width="1.6" paint-order="stroke fill" stroke-linejoin="miter"/>
<rect x="506.00" y="276.15" width="7" height="1.4" fill="#2a10d0"/>
<path d="M515.00 280.00L518.90 276.60V283.40Z" fill="#ff0c0c" stroke="#ffffff" stroke-width="1.7" paint-order="stroke fill"/>
<path d="M561.00 298.25L560.00 286.50" stroke="#2020ff" stroke-width="1.3" stroke-dasharray="2 2.5"/>
<path d="M561.00 298.25L560.00 286.50" stroke="#e01010" stroke-width="1.3" stroke-dasharray="1 3.5" stroke-dashoffset="-2.5"/>
<path d="M554.40 298.25L551.00 294.75V296.95H548.20V299.55H551.00V301.75Z" fill="#ff0c0c" stroke="#ffffff" stroke-width="1.6" paint-order="stroke fill" stroke-linejoin="miter"/>
<path d="M561.40 298.25L558.00 294.75V296.95H555.20V299.55H558.00V301.75Z" fill="#ff0c0c" stroke="#ffffff" stroke-width="1.6" paint-order="stroke fill" stroke-linejoin="miter"/>
<rect x="551.00" y="298.15" width="7" height="1.4" fill="#2a10d0"/>
<path d="M560.00 286.50L563.90 283.10V289.90Z" fill="#ff0c0c" stroke="#ffffff" stroke-width="1.7" paint-order="stroke fill"/>
<path d="M606.00 278.25L604.50 279.50" stroke="#2020ff" stroke-width="1.3" stroke-dasharray="2 2.5"/>
<path d="M606.00 278.25L604.50 279.50" stroke="#e01010" stroke-width="1.3" stroke-dasharray="1 3.5" stroke-dashoffset="-2.5"/>
<path d="M599.40 278.25L596.00 274.75V276.95H593.20V279.55H596.00V281.75Z" fill="#ff0c0c" stroke="#ffffff" stroke-width="1.6" paint-order="stroke fill" stroke-linejoin="miter"/>
<path d="M606.40 278.25L603.00 274.75V276.95H600.20V279.55H603.00V281.75Z" fill="#ff0c0c" stroke="#ffffff" stroke-width="1.6" paint-order="stroke fill" stroke-linejoin="miter"/>
<rect x="596.00" y="278.15" width="7" height="1.4" fill="#2a10d0"/>
<path d="M604.50 279.50L608.40 276.10V282.90Z" fill="#ff0c0c" stroke="#ffffff" stroke-width="1.7" paint-order="stroke fill"/>
<path d="M658.50 280.75L657.80 255.00" stroke="#2020ff" stroke-width="1.3" stroke-dasharray="2 2.5"/>
<path d="M658.50 280.75L657.80 255.00" stroke="#e01010" stroke-width="1.3" stroke-dasharray="1 3.5" stroke-dashoffset="-2.5"/>
<path d="M651.90 280.75L648.50 277.25V279.45H645.70V282.05H648.50V284.25Z" fill="#ff0c0c" stroke="#ffffff" stroke-width="1.6" paint-order="stroke fill" stroke-linejoin="miter"/>
<path d="M658.90 280.75L655.50 277.25V279.45H652.70V282.05H655.50V284.25Z" fill="#ff0c0c" stroke="#ffffff" stroke-width="1.6" paint-order="stroke fill" stroke-linejoin="miter"/>
<rect x="648.50" y="280.65" width="7" height="1.4" fill="#2a10d0"/>
<path d="M657.80 255.00L661.70 251.60V258.40Z" fill="#ff0c0c" stroke="#ffffff" stroke-width="1.7" paint-order="stroke fill"/>
<path d="M703.50 244.50L702.50 251.75" stroke="#2020ff" stroke-width="1.3" stroke-dasharray="2 2.5"/>
<path d="M703.50 244.50L702.50 251.75" stroke="#e01010" stroke-width="1.3" stroke-dasharray="1 3.5" stroke-dashoffset="-2.5"/>
<path d="M696.90 244.50L693.50 241.00V243.20H690.70V245.80H693.50V248.00Z" fill="#ff0c0c" stroke="#ffffff" stroke-width="1.6" paint-order="stroke fill" stroke-linejoin="miter"/>
<path d="M703.90 244.50L700.50 241.00V243.20H697.70V245.80H700.50V248.00Z" fill="#ff0c0c" stroke="#ffffff" stroke-width="1.6" paint-order="stroke fill" stroke-linejoin="miter"/>
<rect x="693.50" y="244.40" width="7" height="1.4" fill="#2a10d0"/>
<path d="M702.50 251.75L706.40 248.35V255.15Z" fill="#ff0c0c" stroke="#ffffff" stroke-width="1.7" paint-order="stroke fill"/>
<path d="M748.50 265.50L747.80 253.25" stroke="#2020ff" stroke-width="1.3" stroke-dasharray="2 2.5"/>
<path d="M748.50 265.50L747.80 253.25" stroke="#e01010" stroke-width="1.3" stroke-dasharray="1 3.5" stroke-dashoffset="-2.5"/>
<path d="M741.90 265.50L738.50 262.00V264.20H735.70V266.80H738.50V269.00Z" fill="#ff0c0c" stroke="#ffffff" stroke-width="1.6" paint-order="stroke fill" stroke-linejoin="miter"/>
<path d="M748.90 265.50L745.50 262.00V264.20H742.70V266.80H745.50V269.00Z" fill="#ff0c0c" stroke="#ffffff" stroke-width="1.6" paint-order="stroke fill" stroke-linejoin="miter"/>
<rect x="738.50" y="265.40" width="7" height="1.4" fill="#2a10d0"/>
<path d="M747.80 253.25L751.70 249.85V256.65Z" fill="#ff0c0c" stroke="#ffffff" stroke-width="1.7" paint-order="stroke fill"/>
<path d="M793.50 264.50L793.00 281.25" stroke="#2020ff" stroke-width="1.3" stroke-dasharray="2 2.5"/>
<path d="M793.50 264.50L793.00 281.25" stroke="#e01010" stroke-width="1.3" stroke-dasharray="1 3.5" stroke-dashoffset="-2.5"/>
<path d="M786.90 264.50L783.50 261.00V263.20H780.70V265.80H783.50V268.00Z" fill="#ff0c0c" stroke="#ffffff" stroke-width="1.6" paint-order="stroke fill" stroke-linejoin="miter"/>
<path d="M793.90 264.50L790.50 261.00V263.20H787.70V265.80H790.50V268.00Z" fill="#ff0c0c" stroke="#ffffff" stroke-width="1.6" paint-order="stroke fill" stroke-linejoin="miter"/>
<rect x="783.50" y="264.40" width="7" height="1.4" fill="#2a10d0"/>
<path d="M793.00 281.25L796.90 277.85V284.65Z" fill="#ff0c0c" stroke="#ffffff" stroke-width="1.7" paint-order="stroke fill"/>
<path d="M838.50 277.50L837.80 261.25" stroke="#2020ff" stroke-width="1.3" stroke-dasharray="2 2.5"/>
<path d="M838.50 277.50L837.80 261.25" stroke="#e01010" stroke-width="1.3" stroke-dasharray="1 3.5" stroke-dashoffset="-2.5"/>
<path d="M831.90 277.50L828.50 274.00V276.20H825.70V278.80H828.50V281.00Z" fill="#ff0c0c" stroke="#ffffff" stroke-width="1.6" paint-order="stroke fill" stroke-linejoin="miter"/>
<path d="M838.90 277.50L835.50 274.00V276.20H832.70V278.80H835.50V281.00Z" fill="#ff0c0c" stroke="#ffffff" stroke-width="1.6" paint-order="stroke fill" stroke-linejoin="miter"/>
<rect x="828.50" y="277.40" width="7" height="1.4" fill="#2a10d0"/>
<path d="M837.80 261.25L841.70 257.85V264.65Z" fill="#ff0c0c" stroke="#ffffff" stroke-width="1.7" paint-order="stroke fill"/>
<path d="M891.00 225.75L891.00 217.00" stroke="#2020ff" stroke-width="1.3" stroke-dasharray="2 2.5"/>
<path d="M891.00 225.75L891.00 217.00" stroke="#e01010" stroke-width="1.3" stroke-dasharray="1 3.5" stroke-dashoffset="-2.5"/>
<path d="M884.40 225.75L881.00 222.25V224.45H878.20V227.05H881.00V229.25Z" fill="#ff0c0c" stroke="#ffffff" stroke-width="1.6" paint-order="stroke fill" stroke-linejoin="miter"/>
<path d="M891.40 225.75L888.00 222.25V224.45H885.20V227.05H888.00V229.25Z" fill="#ff0c0c" stroke="#ffffff" stroke-width="1.6" paint-order="stroke fill" stroke-linejoin="miter"/>
<rect x="881.00" y="225.65" width="7" height="1.4" fill="#2a10d0"/>
<path d="M891.00 217.00L894.90 213.60V220.40Z" fill="#ff0c0c" stroke="#ffffff" stroke-width="1.7" paint-order="stroke fill"/>
<path d="M936.00 186.25L934.80 187.50" stroke="#2020ff" stroke-width="1.3" stroke-dasharray="2 2.5"/>
<path d="M936.00 186.25L934.80 187.50" stroke="#e01010" stroke-width="1.3" stroke-dasharray="1 3.5" stroke-dashoffset="-2.5"/>
<path d="M929.40 186.25L926.00 182.75V184.95H923.20V187.55H926.00V189.75Z" fill="#ff0c0c" stroke="#ffffff" stroke-width="1.6" paint-order="stroke fill" stroke-linejoin="miter"/>
<path d="M936.40 186.25L933.00 182.75V184.95H930.20V187.55H933.00V189.75Z" fill="#ff0c0c" stroke="#ffffff" stroke-width="1.6" paint-order="stroke fill" stroke-linejoin="miter"/>
<rect x="926.00" y="186.15" width="7" height="1.4" fill="#2a10d0"/>
<path d="M934.80 187.50L938.70 184.10V190.90Z" fill="#ff0c0c" stroke="#ffffff" stroke-width="1.7" paint-order="stroke fill"/>
<path d="M981.00 196.25L980.50 214.50" stroke="#2020ff" stroke-width="1.3" stroke-dasharray="2 2.5"/>
<path d="M981.00 196.25L980.50 214.50" stroke="#e01010" stroke-width="1.3" stroke-dasharray="1 3.5" stroke-dashoffset="-2.5"/>
<path d="M974.40 196.25L971.00 192.75V194.95H968.20V197.55H971.00V199.75Z" fill="#ff0c0c" stroke="#ffffff" stroke-width="1.6" paint-order="stroke fill" stroke-linejoin="miter"/>
<path d="M981.40 196.25L978.00 192.75V194.95H975.20V197.55H978.00V199.75Z" fill="#ff0c0c" stroke="#ffffff" stroke-width="1.6" paint-order="stroke fill" stroke-linejoin="miter"/>
<rect x="971.00" y="196.15" width="7" height="1.4" fill="#2a10d0"/>
<path d="M980.50 214.50L984.40 211.10V217.90Z" fill="#ff0c0c" stroke="#ffffff" stroke-width="1.7" paint-order="stroke fill"/>
<path d="M1026.00 206.25L1026.00 218.25" stroke="#2020ff" stroke-width="1.3" stroke-dasharray="2 2.5"/>
<path d="M1026.00 206.25L1026.00 218.25" stroke="#e01010" stroke-width="1.3" stroke-dasharray="1 3.5" stroke-dashoffset="-2.5"/>
<path d="M1019.40 206.25L1016.00 202.75V204.95H1013.20V207.55H1016.00V209.75Z" fill="#ff0c0c" stroke="#ffffff" stroke-width="1.6" paint-order="stroke fill" stroke-linejoin="miter"/>
<path d="M1026.40 206.25L1023.00 202.75V204.95H1020.20V207.55H1023.00V209.75Z" fill="#ff0c0c" stroke="#ffffff" stroke-width="1.6" paint-order="stroke fill" stroke-linejoin="miter"/>
<rect x="1016.00" y="206.15" width="7" height="1.4" fill="#2a10d0"/>
<path d="M1026.00 218.25L1029.90 214.85V221.65Z" fill="#ff0c0c" stroke="#ffffff" stroke-width="1.7" paint-order="stroke fill"/>
<path d="M1071.00 210.00L1070.30 187.50" stroke="#2020ff" stroke-width="1.3" stroke-dasharray="2 2.5"/>
<path d="M1071.00 210.00L1070.30 187.50" stroke="#e01010" stroke-width="1.3" stroke-dasharray="1 3.5" stroke-dashoffset="-2.5"/>
<path d="M1064.40 210.00L1061.00 206.50V208.70H1058.20V211.30H1061.00V213.50Z" fill="#ff0c0c" stroke="#ffffff" stroke-width="1.6" paint-order="stroke fill" stroke-linejoin="miter"/>
<path d="M1071.40 210.00L1068.00 206.50V208.70H1065.20V211.30H1068.00V213.50Z" fill="#ff0c0c" stroke="#ffffff" stroke-width="1.6" paint-order="stroke fill" stroke-linejoin="miter"/>
<rect x="1061.00" y="209.90" width="7" height="1.4" fill="#2a10d0"/>
<path d="M1070.30 187.50L1074.20 184.10V190.90Z" fill="#ff0c0c" stroke="#ffffff" stroke-width="1.7" paint-order="stroke fill"/>
<path d="M1122.25 155.75L1122.30 155.50" stroke="#2020ff" stroke-width="1.3" stroke-dasharray="2 2.5"/>
<path d="M1122.25 155.75L1122.30 155.50" stroke="#e01010" stroke-width="1.3" stroke-dasharray="1 3.5" stroke-dashoffset="-2.5"/>
<path d="M1115.65 155.75L1112.25 152.25V154.45H1109.45V157.05H1112.25V159.25Z" fill="#ff0c0c" stroke="#ffffff" stroke-width="1.6" paint-order="stroke fill" stroke-linejoin="miter"/>
<path d="M1122.65 155.75L1119.25 152.25V154.45H1116.45V157.05H1119.25V159.25Z" fill="#ff0c0c" stroke="#ffffff" stroke-width="1.6" paint-order="stroke fill" stroke-linejoin="miter"/>
<rect x="1112.25" y="155.65" width="7" height="1.4" fill="#2a10d0"/>
<path d="M1122.30 155.50L1126.20 152.10V158.90Z" fill="#ff0c0c" stroke="#ffffff" stroke-width="1.7" paint-order="stroke fill"/>
<path d="M1169.40 165.00L1169.00 148.80" stroke="#2020ff" stroke-width="1.3" stroke-dasharray="2 2.5"/>
<path d="M1169.40 165.00L1169.00 148.80" stroke="#e01010" stroke-width="1.3" stroke-dasharray="1 3.5" stroke-dashoffset="-2.5"/>
<path d="M1162.80 165.00L1159.40 161.50V163.70H1156.60V166.30H1159.40V168.50Z" fill="#ff0c0c" stroke="#ffffff" stroke-width="1.6" paint-order="stroke fill" stroke-linejoin="miter"/>
<path d="M1169.80 165.00L1166.40 161.50V163.70H1163.60V166.30H1166.40V168.50Z" fill="#ff0c0c" stroke="#ffffff" stroke-width="1.6" paint-order="stroke fill" stroke-linejoin="miter"/>
<rect x="1159.40" y="164.90" width="7" height="1.4" fill="#2a10d0"/>
<path d="M1169.00 148.80L1172.90 145.40V152.20Z" fill="#ff0c0c" stroke="#ffffff" stroke-width="1.7" paint-order="stroke fill"/>
<path d="M1213.90 118.90L1213.40 129.30" stroke="#2020ff" stroke-width="1.3" stroke-dasharray="2 2.5"/>
<path d="M1213.90 118.90L1213.40 129.30" stroke="#e01010" stroke-width="1.3" stroke-dasharray="1 3.5" stroke-dashoffset="-2.5"/>
<path d="M1207.30 118.90L1203.90 115.40V117.60H1201.10V120.20H1203.90V122.40Z" fill="#ff0c0c" stroke="#ffffff" stroke-width="1.6" paint-order="stroke fill" stroke-linejoin="miter"/>
<path d="M1214.30 118.90L1210.90 115.40V117.60H1208.10V120.20H1210.90V122.40Z" fill="#ff0c0c" stroke="#ffffff" stroke-width="1.6" paint-order="stroke fill" stroke-linejoin="miter"/>
<rect x="1203.90" y="118.80" width="7" height="1.4" fill="#2a10d0"/>
<path d="M1213.40 129.30L1217.30 125.90V132.70Z" fill="#ff0c0c" stroke="#ffffff" stroke-width="1.7" paint-order="stroke fill"/>
<g font-family="Liberation Sans, sans-serif" fill="#e8e8e8">
<text x="248.6" y="107.8" font-size="8.7">XAUUSD,H4&#160; 3855.627 3863.828 3852.170 3862.434</text>
<text x="1233" y="129.30" font-size="8.7">3872.770</text>
<rect x="1227.6" y="125.60" width="3.5" height="1" fill="#d0d0d0"/>
<text x="1233" y="160.21" font-size="8.7">3827.065</text>
<rect x="1227.6" y="156.51" width="3.5" height="1" fill="#d0d0d0"/>
<text x="1233" y="191.12" font-size="8.7">3781.360</text>
<rect x="1227.6" y="187.42" width="3.5" height="1" fill="#d0d0d0"/>
<text x="1233" y="222.03" font-size="8.7">3735.655</text>
<rect x="1227.6" y="218.33" width="3.5" height="1" fill="#d0d0d0"/>
<text x="1233" y="252.94" font-size="8.7">3688.565</text>
<rect x="1227.6" y="249.24" width="3.5" height="1" fill="#d0d0d0"/>
<text x="1233" y="283.85" font-size="8.7">3642.860</text>
<rect x="1227.6" y="280.15" width="3.5" height="1" fill="#d0d0d0"/>
<text x="1233" y="314.76" font-size="8.7">3597.155</text>
<rect x="1227.6" y="311.06" width="3.5" height="1" fill="#d0d0d0"/>
<text x="1233" y="345.67" font-size="8.7">3551.450</text>
<rect x="1227.6" y="341.97" width="3.5" height="1" fill="#d0d0d0"/>
<text x="1233" y="376.58" font-size="8.7">3505.745</text>
<rect x="1227.6" y="372.88" width="3.5" height="1" fill="#d0d0d0"/>
</g>
<rect x="1228.4" y="128.2" width="44" height="12" fill="#fff"/>
<text x="1233" y="137.0" font-size="8.7" font-family="Liberation Sans, sans-serif" fill="#000">3862.434</text>
<path d="M1025.5 97.6H1034.5L1030 101.8Z" fill="#6f8294"/>
<g font-family="Liberation Sans, sans-serif" fill="#e8e8e8" font-size="8.6">
<text x="244.40" y="388.2">2 Sep 2025</text>
<rect x="245.00" y="376.5" width="1" height="3.5" fill="#d0d0d0"/>
<text x="304.46" y="388.2">4 Sep 04:00</text>
<rect x="305.06" y="376.5" width="1" height="3.5" fill="#d0d0d0"/>
<text x="364.52" y="388.2">5 Sep 12:00</text>
<rect x="365.12" y="376.5" width="1" height="3.5" fill="#d0d0d0"/>
<text x="424.58" y="388.2">8 Sep 16:00</text>
<rect x="425.18" y="376.5" width="1" height="3.5" fill="#d0d0d0"/>
<text x="484.64" y="388.2">10 Sep 00:00</text>
<rect x="485.24" y="376.5" width="1" height="3.5" fill="#d0d0d0"/>
<text x="544.70" y="388.2">11 Sep 08:00</text>
<rect x="545.30" y="376.5" width="1" height="3.5" fill="#d0d0d0"/>
<text x="604.76" y="388.2">12 Sep 16:00</text>
<rect x="605.36" y="376.5" width="1" height="3.5" fill="#d0d0d0"/>
<text x="664.82" y="388.2">15 Sep 20:00</text>
<rect x="665.42" y="376.5" width="1" height="3.5" fill="#d0d0d0"/>
<text x="724.88" y="388.2">17 Sep 04:00</text>
<rect x="725.48" y="376.5" width="1" height="3.5" fill="#d0d0d0"/>
<text x="784.94" y="388.2">18 Sep 12:00</text>
<rect x="785.54" y="376.5" width="1" height="3.5" fill="#d0d0d0"/>
<text x="845.00" y="388.2">19 Sep 20:00</text>
<rect x="845.60" y="376.5" width="1" height="3.5" fill="#d0d0d0"/>
<text x="905.06" y="388.2">23 Sep 00:00</text>
<rect x="905.66" y="376.5" width="1" height="3.5" fill="#d0d0d0"/>
<text x="965.12" y="388.2">24 Sep 08:00</text>
<rect x="965.72" y="376.5" width="1" height="3.5" fill="#d0d0d0"/>
<text x="1025.18" y="388.2">25 Sep 16:00</text>
<rect x="1025.78" y="376.5" width="1" height="3.5" fill="#d0d0d0"/>
<text x="1085.24" y="388.2">28 Sep 22:05</text>
<rect x="1085.84" y="376.5" width="1" height="3.5" fill="#d0d0d0"/>
<text x="1145.30" y="388.2">30 Sep 04:00</text>
<rect x="1145.90" y="376.5" width="1" height="3.5" fill="#d0d0d0"/>
<text x="1205.36" y="388.2">1 Oct 12:00</text>
<rect x="1205.96" y="376.5" width="1" height="3.5" fill="#d0d0d0"/>
</g>
</svg>
<div class="r" style="left:242.2px;top:395px;width:1034px;height:1.2px;background:#fafafa"></div>
<div class="r" style="left:242.2px;top:396.2px;width:1034px;height:1px;background:#a8a8a8"></div>
<div class="r" style="left:240.6px;top:395px;width:1.2px;height:20.5px;background:#5a5a5a"></div>
<div class="r" style="left:1276.5px;top:93px;width:3.5px;height:534px;background:#8c8c8c"></div>
<div class="r" style="left:1277.6px;top:93px;width:2.4px;height:34.6px;background:#7b2fd0"></div>
<div class="r" style="left:1275.4px;top:395px;width:1.2px;height:21px;background:#fafafa"></div>
<div class="t" style="left:257.80px;top:401.40px;font-size:10.4px;color:#8a8a8a">EURUSD,M5 (visual)</div>
<div class="r" style="left:365.80px;top:400.5px;width:1.2px;height:12.5px;background:#5a5a5a"></div>
<div class="t" style="left:376.50px;top:401.40px;font-size:10.4px;color:#8a8a8a">EURUSD,M15 (visual)</div>
<div class="r" style="left:489.70px;top:400.5px;width:1.2px;height:12.5px;background:#5a5a5a"></div>
<div class="t" style="left:500.30px;top:401.40px;font-size:10.4px;color:#8a8a8a">EURUSD,M30 (visual)</div>
<div class="r" style="left:613.50px;top:400.5px;width:1.2px;height:12.5px;background:#5a5a5a"></div>
<div class="t" style="left:624.50px;top:401.40px;font-size:10.4px;color:#8a8a8a">EURUSD,H1 (visual)</div>
<div class="r" style="left:729.70px;top:400.5px;width:1.2px;height:12.5px;background:#5a5a5a"></div>
<div class="t" style="left:740.30px;top:401.40px;font-size:10.4px;color:#8a8a8a">EURUSD,H4 (visual)</div>
<div class="r" style="left:846.60px;top:400.5px;width:1.2px;height:12.5px;background:#5a5a5a"></div>
<div class="t" style="left:856.60px;top:401.40px;font-size:10.4px;color:#8a8a8a">USDJPY,H4 (visual)</div>
<div class="t" style="left:1089.30px;top:401.40px;font-size:10.4px;color:#8a8a8a">XAUUSD,M1 (visual)</div>
<div class="r" style="left:1198.90px;top:400.5px;width:1.2px;height:12.5px;background:#5a5a5a"></div>
<div class="r" style="left:959.3px;top:394.6px;width:119.3px;height:20.4px;background:#fff;border:1.3px solid #2a2a2a;border-top:none;box-sizing:border-box"></div>
<div class="t" style="left:970.2px;top:401.31px;font-size:10.5px;color:#1a1a1a">XAUUSD,H4 (visual)</div>
<svg class="r" style="left:1244px;top:401px" width="26" height="9" viewBox="0 0 26 9"><path d="M6.5 1L2.5 4.5L6.5 8Z" fill="#222"/><path d="M20.5 1L24.5 4.5L20.5 8Z" fill="#a0a0a0"/></svg>
<div class="r" style="left:0.00px;top:433.30px;width:12.00px;height:193.70px;background:linear-gradient(180deg,#b8cfe6,#a3bedb);"></div>
<svg class="r" style="left:2.5px;top:421.5px" width="7" height="7" viewBox="0 0 7 7"><path d="M0.8 0.8L6.2 6.2M6.2 0.8L0.8 6.2" stroke="#111" stroke-width="1.5"/></svg>
<div class="r" style="left:0;top:433.3px;width:12px;height:193.7px;overflow:hidden"><div class="t" style="left:1.5px;top:214px;font-size:10.5px;color:#1a1a3a;transform:rotate(-90deg);transform-origin:0 0">Tester</div></div>
<div class="r" style="left:12.00px;top:420.00px;width:1.00px;height:207.00px;background:#f8f8f8;"></div>
<div class="r" style="left:13.00px;top:420.00px;width:1.10px;height:207.00px;background:#a8a8a8;"></div>
<div class="r" style="left:13.40px;top:420.00px;width:1260.60px;height:1.00px;background:#a8a8a8;"></div>
<div class="r" style="left:13.40px;top:421.00px;width:1243.80px;height:18.72px;background:#e9e9e9;"></div>
<div class="r" style="left:13.40px;top:438.72px;width:1243.80px;height:1.00px;background:#c4c4c4;"></div>
<div class="t" style="left:22.00px;top:424.77px;font-size:10.9px;color:#1a1a1a">Bars in test</div>
<div class="t" style="right:873.50px;top:425.28px;font-size:10.3px;color:#1a1a1a">33844</div>
<div class="t" style="left:440.50px;top:424.77px;font-size:10.9px;color:#1a1a1a">Ticks modelled</div>
<div class="t" style="right:451.40px;top:425.28px;font-size:10.3px;color:#1a1a1a">66686</div>
<div class="t" style="left:862.20px;top:424.77px;font-size:10.9px;color:#1a1a1a">Modelling quality</div>
<div class="t" style="right:26.40px;top:424.77px;font-size:10.9px;color:#1a1a1a">n/a</div>
<div class="r" style="left:13.40px;top:439.72px;width:1243.80px;height:18.72px;background:#ffffff;"></div>
<div class="r" style="left:13.40px;top:457.44px;width:1243.80px;height:1.00px;background:#c4c4c4;"></div>
<div class="t" style="left:22.00px;top:443.49px;font-size:10.9px;color:#1a1a1a">Mismatched charts errors</div>
<div class="t" style="right:873.50px;top:444.00px;font-size:10.3px;color:#1a1a1a">0</div>
<div class="r" style="left:13.40px;top:458.44px;width:1243.80px;height:18.72px;background:#e9e9e9;"></div>
<div class="r" style="left:13.40px;top:476.16px;width:1243.80px;height:1.00px;background:#c4c4c4;"></div>
<div class="t" style="left:22.00px;top:462.21px;font-size:10.9px;color:#1a1a1a">Initial deposit</div>
<div class="t" style="right:873.50px;top:462.72px;font-size:10.3px;color:#1a1a1a">10000.00</div>
<div class="t" style="left:862.20px;top:462.21px;font-size:10.9px;color:#1a1a1a">Spread</div>
<div class="t" style="right:26.40px;top:462.21px;font-size:10.9px;color:#1a1a1a">Current (112)</div>
<div class="r" style="left:13.40px;top:477.16px;width:1243.80px;height:18.72px;background:#ffffff;"></div>
<div class="r" style="left:13.40px;top:494.88px;width:1243.80px;height:1.00px;background:#c4c4c4;"></div>
<div class="t" style="left:22.00px;top:480.93px;font-size:10.9px;color:#1a1a1a">Total net profit</div>
<div class="t" style="right:873.50px;top:481.44px;font-size:10.3px;color:#1a1a1a">320.11</div>
<div class="t" style="left:440.50px;top:480.93px;font-size:10.9px;color:#1a1a1a">Gross profit</div>
<div class="t" style="right:451.40px;top:481.44px;font-size:10.3px;color:#1a1a1a">2103.65</div>
<div class="t" style="left:862.20px;top:480.93px;font-size:10.9px;color:#1a1a1a">Gross loss</div>
<div class="t" style="right:26.40px;top:481.44px;font-size:10.3px;color:#1a1a1a">-1783.54</div>
<div class="r" style="left:13.40px;top:495.88px;width:1243.80px;height:18.72px;background:#e9e9e9;"></div>
<div class="r" style="left:13.40px;top:513.60px;width:1243.80px;height:1.00px;background:#c4c4c4;"></div>
<div class="t" style="left:22.00px;top:499.65px;font-size:10.9px;color:#1a1a1a">Profit factor</div>
<div class="t" style="right:873.50px;top:500.16px;font-size:10.3px;color:#1a1a1a">1.18</div>
<div class="t" style="left:440.50px;top:499.65px;font-size:10.9px;color:#1a1a1a">Expected payoff</div>
<div class="t" style="right:451.40px;top:500.16px;font-size:10.3px;color:#1a1a1a">0.06</div>
<div class="r" style="left:13.40px;top:514.60px;width:1243.80px;height:18.72px;background:#ffffff;"></div>
<div class="r" style="left:13.40px;top:532.32px;width:1243.80px;height:1.00px;background:#c4c4c4;"></div>
<div class="t" style="left:22.00px;top:518.37px;font-size:10.9px;color:#1a1a1a">Absolute drawdown</div>
<div class="t" style="right:873.50px;top:518.88px;font-size:10.3px;color:#1a1a1a">1.46</div>
<div class="t" style="left:440.50px;top:518.37px;font-size:10.9px;color:#1a1a1a">Maximal drawdown</div>
<div class="t" style="right:451.40px;top:518.88px;font-size:10.3px;color:#1a1a1a">61.59 (0.61%)</div>
<div class="t" style="left:862.20px;top:518.37px;font-size:10.9px;color:#1a1a1a">Relative drawdown</div>
<div class="t" style="right:26.40px;top:518.88px;font-size:10.3px;color:#1a1a1a">0.61% (61.59)</div>
<div class="r" style="left:13.40px;top:533.32px;width:1243.80px;height:18.72px;background:#e9e9e9;"></div>
<div class="r" style="left:13.40px;top:551.04px;width:1243.80px;height:1.00px;background:#c4c4c4;"></div>
<div class="t" style="left:22.00px;top:537.09px;font-size:10.9px;color:#1a1a1a">Total trades</div>
<div class="t" style="right:873.50px;top:537.60px;font-size:10.3px;color:#1a1a1a">5074</div>
<div class="t" style="left:440.50px;top:537.09px;font-size:10.9px;color:#1a1a1a">Short positions (won %)</div>
<div class="t" style="right:451.40px;top:537.60px;font-size:10.3px;color:#1a1a1a">2524 (54.44%)</div>
<div class="t" style="left:862.20px;top:537.09px;font-size:10.9px;color:#1a1a1a">Long positions (won %)</div>
<div class="t" style="right:26.40px;top:537.60px;font-size:10.3px;color:#1a1a1a">2550 (57.76%)</div>
<div class="r" style="left:13.40px;top:552.04px;width:1243.80px;height:18.72px;background:#ffffff;"></div>
<div class="r" style="left:13.40px;top:569.76px;width:1243.80px;height:1.00px;background:#c4c4c4;"></div>
<div class="t" style="left:440.50px;top:555.81px;font-size:10.9px;color:#1a1a1a">Profit trades (% of total)</div>
<div class="t" style="right:451.40px;top:556.32px;font-size:10.3px;color:#1a1a1a">2847 (56.11%)</div>
<div class="t" style="left:862.20px;top:555.81px;font-size:10.9px;color:#1a1a1a">Loss trades (% of total)</div>
<div class="t" style="right:26.40px;top:556.32px;font-size:10.3px;color:#1a1a1a">2227 (43.89%)</div>
<div class="r" style="left:13.40px;top:570.76px;width:1243.80px;height:18.72px;background:#e9e9e9;"></div>
<div class="r" style="left:13.40px;top:588.48px;width:1243.80px;height:1.00px;background:#c4c4c4;"></div>
<div class="t" style="right:873.50px;top:574.53px;font-size:10.9px;color:#1a1a1a">Largest</div>
<div class="t" style="left:440.50px;top:574.53px;font-size:10.9px;color:#1a1a1a">profit trade</div>
<div class="t" style="right:451.40px;top:575.04px;font-size:10.3px;color:#1a1a1a">9.17</div>
<div class="t" style="left:862.20px;top:574.53px;font-size:10.9px;color:#1a1a1a">loss trade</div>
<div class="t" style="right:26.40px;top:575.04px;font-size:10.3px;color:#1a1a1a">-2.44</div>
<div class="r" style="left:13.40px;top:589.48px;width:1243.80px;height:18.72px;background:#ffffff;"></div>
<div class="r" style="left:13.40px;top:607.20px;width:1243.80px;height:1.00px;background:#c4c4c4;"></div>
<div class="t" style="right:873.50px;top:593.25px;font-size:10.9px;color:#1a1a1a">Average</div>
<div class="t" style="left:440.50px;top:593.25px;font-size:10.9px;color:#1a1a1a">profit trade</div>
<div class="t" style="right:451.40px;top:593.76px;font-size:10.3px;color:#1a1a1a">0.74</div>
<div class="t" style="left:862.20px;top:593.25px;font-size:10.9px;color:#1a1a1a">loss trade</div>
<div class="t" style="right:26.40px;top:593.76px;font-size:10.3px;color:#1a1a1a">-0.80</div>
<div class="r" style="left:13.40px;top:608.20px;width:1243.80px;height:18.80px;background:#e9e9e9;"></div>
<div class="t" style="right:873.50px;top:611.97px;font-size:10.9px;color:#1a1a1a">Maximum</div>
<div class="t" style="left:440.50px;top:611.97px;font-size:10.9px;color:#1a1a1a">consecutive wins (profit in money)</div>
<div class="t" style="right:451.40px;top:612.48px;font-size:10.3px;color:#1a1a1a">10 (4.96)</div>
<div class="t" style="left:862.20px;top:611.97px;font-size:10.9px;color:#1a1a1a">consecutive losses (loss in money)</div>
<div class="t" style="right:26.40px;top:612.48px;font-size:10.3px;color:#1a1a1a">8 (-6.40)</div>
<div class="r" style="left:437.30px;top:439.42px;width:819.90px;height:18.02px;background:#ececec;"></div>
<div class="r" style="left:437.60px;top:439.40px;width:817.00px;height:10.30px;background:#00f000;"></div>
<div class="r" style="left:437.60px;top:449.70px;width:817.00px;height:1.00px;background:#c4ccf0;"></div>
<div class="r" style="left:437.60px;top:450.70px;width:817.00px;height:0.80px;background:#e4ded4;"></div>
<div class="r" style="left:1254.50px;top:439.20px;width:1.10px;height:17.50px;background:#5a9ee8;"></div>
<div class="r" style="left:437.6px;top:450.5px;width:817px;height:6.8px;overflow:hidden">
<div class="t" style="left:421.2px;top:3.9px;font-size:8px;color:#333">Spread</div>
<div class="t" style="left:775.8px;top:3.9px;font-size:8.6px;color:#333">Current (20)</div>
</div>
<div class="r" style="left:1257.20px;top:421.00px;width:16.70px;height:206.00px;background:#f0f0f0;"></div>
<div class="r" style="left:1273.90px;top:417.00px;width:2.60px;height:210.00px;background:#f4f4f4;"></div>
<div class="r" style="left:1259.00px;top:436.70px;width:13.00px;height:147.30px;background:#cdcdcd;"></div>
<svg class="r" style="left:1261px;top:426px" width="9" height="7" viewBox="0 0 9 7"><path d="M1 5.5L4.5 2L8 5.5" fill="none" stroke="#606060" stroke-width="1.5"/></svg>
<svg class="r" style="left:1261px;top:614px" width="9" height="7" viewBox="0 0 9 7"><path d="M1 1.5L4.5 5L8 1.5" fill="none" stroke="#606060" stroke-width="1.5"/></svg>
<svg class="r" style="left:0;top:0;pointer-events:none" width="1280" height="720" viewBox="0 0 1280 720">
<defs><clipPath id="app"><rect x="0" y="93" width="1280" height="534"/></clipPath></defs>
<g clip-path="url(#app)">
<g transform="translate(475.00,169.20) scale(1.28)" fill="#aaaaaa" color="#aaaaaa" opacity="0.3"><path d="M0 0L36.5 36.5L32 41L0 9.05L-32 41L-36.5 36.5Z"/><path d="M-3.9 6H3.9V86L0 91L-3.9 86Z"/><path d="M-22.5 26H-15.2V74L-22.5 67Z"/><path d="M15.2 26H22.5V67L15.2 74Z"/><rect x="-15.2" y="42" width="30.4" height="8"/><text x="-46.5" y="110.3" font-size="14.6" letter-spacing="3.0" font-weight="bold" font-family="Liberation Sans, sans-serif" stroke-width="0.7" stroke="currentColor">YOFOREX</text></g>
<g transform="translate(829.90,176.20) scale(1.0)" fill="#aaaaaa" color="#aaaaaa" opacity="0.3"><path d="M0 0L36.5 36.5L32 41L0 9.05L-32 41L-36.5 36.5Z"/><path d="M-3.9 6H3.9V86L0 91L-3.9 86Z"/><path d="M-22.5 26H-15.2V74L-22.5 67Z"/><path d="M15.2 26H22.5V67L15.2 74Z"/><rect x="-15.2" y="42" width="30.4" height="8"/><text x="-46.5" y="110.3" font-size="14.6" letter-spacing="3.0" font-weight="bold" font-family="Liberation Sans, sans-serif" stroke-width="0.7" stroke="currentColor">YOFOREX</text></g>
<g transform="translate(1154.00,165.20) scale(1.0)" fill="#aaaaaa" color="#aaaaaa" opacity="0.3"><path d="M0 0L36.5 36.5L32 41L0 9.05L-32 41L-36.5 36.5Z"/><path d="M-3.9 6H3.9V86L0 91L-3.9 86Z"/><path d="M-22.5 26H-15.2V74L-22.5 67Z"/><path d="M15.2 26H22.5V67L15.2 74Z"/><rect x="-15.2" y="42" width="30.4" height="8"/><text x="-46.5" y="110.3" font-size="14.6" letter-spacing="3.0" font-weight="bold" font-family="Liberation Sans, sans-serif" stroke-width="0.7" stroke="currentColor">YOFOREX</text></g>
<g transform="translate(156.70,178.00) scale(1.0)" fill="#aaaaaa" color="#aaaaaa" opacity="0.16"><path d="M0 0L36.5 36.5L32 41L0 9.05L-32 41L-36.5 36.5Z"/><path d="M-3.9 6H3.9V86L0 91L-3.9 86Z"/><path d="M-22.5 26H-15.2V74L-22.5 67Z"/><path d="M15.2 26H22.5V67L15.2 74Z"/><rect x="-15.2" y="42" width="30.4" height="8"/><text x="-46.5" y="110.3" font-size="14.6" letter-spacing="3.0" font-weight="bold" font-family="Liberation Sans, sans-serif" stroke-width="0.7" stroke="currentColor">YOFOREX</text></g>
<g transform="translate(154.00,478.50) scale(1.0)" fill="#aaaaaa" color="#aaaaaa" opacity="0.2"><path d="M0 0L36.5 36.5L32 41L0 9.05L-32 41L-36.5 36.5Z"/><path d="M-3.9 6H3.9V86L0 91L-3.9 86Z"/><path d="M-22.5 26H-15.2V74L-22.5 67Z"/><path d="M15.2 26H22.5V67L15.2 74Z"/><rect x="-15.2" y="42" width="30.4" height="8"/><text x="-46.5" y="110.3" font-size="14.6" letter-spacing="3.0" font-weight="bold" font-family="Liberation Sans, sans-serif" stroke-width="0.7" stroke="currentColor">YOFOREX</text></g>
<g transform="translate(519.80,478.50) scale(1.0)" fill="#aaaaaa" color="#aaaaaa" opacity="0.2"><path d="M0 0L36.5 36.5L32 41L0 9.05L-32 41L-36.5 36.5Z"/><path d="M-3.9 6H3.9V86L0 91L-3.9 86Z"/><path d="M-22.5 26H-15.2V74L-22.5 67Z"/><path d="M15.2 26H22.5V67L15.2 74Z"/><rect x="-15.2" y="42" width="30.4" height="8"/><text x="-46.5" y="110.3" font-size="14.6" letter-spacing="3.0" font-weight="bold" font-family="Liberation Sans, sans-serif" stroke-width="0.7" stroke="currentColor">YOFOREX</text></g>
<g transform="translate(833.90,478.50) scale(1.0)" fill="#aaaaaa" color="#aaaaaa" opacity="0.2"><path d="M0 0L36.5 36.5L32 41L0 9.05L-32 41L-36.5 36.5Z"/><path d="M-3.9 6H3.9V86L0 91L-3.9 86Z"/><path d="M-22.5 26H-15.2V74L-22.5 67Z"/><path d="M15.2 26H22.5V67L15.2 74Z"/><rect x="-15.2" y="42" width="30.4" height="8"/><text x="-46.5" y="110.3" font-size="14.6" letter-spacing="3.0" font-weight="bold" font-family="Liberation Sans, sans-serif" stroke-width="0.7" stroke="currentColor">YOFOREX</text></g>
<g transform="translate(1134.00,478.50) scale(1.0)" fill="#aaaaaa" color="#aaaaaa" opacity="0.2"><path d="M0 0L36.5 36.5L32 41L0 9.05L-32 41L-36.5 36.5Z"/><path d="M-3.9 6H3.9V86L0 91L-3.9 86Z"/><path d="M-22.5 26H-15.2V74L-22.5 67Z"/><path d="M15.2 26H22.5V67L15.2 74Z"/><rect x="-15.2" y="42" width="30.4" height="8"/><text x="-46.5" y="110.3" font-size="14.6" letter-spacing="3.0" font-weight="bold" font-family="Liberation Sans, sans-serif" stroke-width="0.7" stroke="currentColor">YOFOREX</text></g>
</g></svg>
</body></html>
